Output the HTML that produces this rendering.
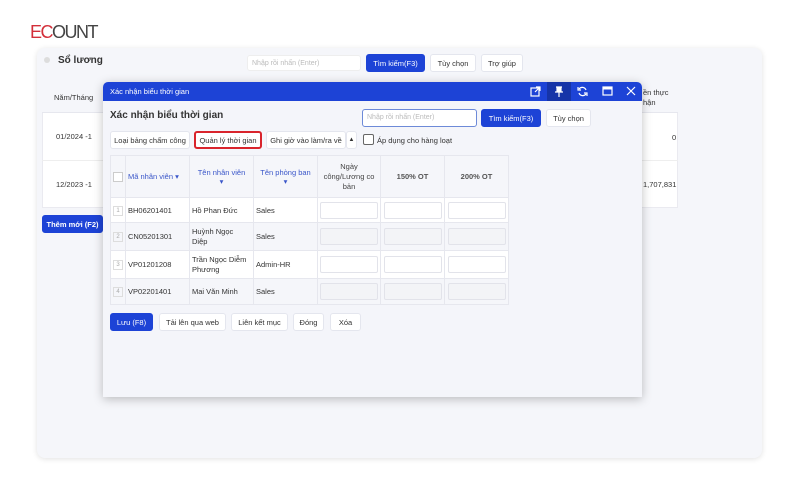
<!DOCTYPE html>
<html><head><meta charset="utf-8"><style>
*{box-sizing:border-box;margin:0;padding:0}
body{width:800px;height:500px;background:#fff;font-family:"Liberation Sans",sans-serif;position:relative;overflow:hidden;color:#333}
.a{position:absolute}
.btn{position:absolute;background:#fff;border:1px solid #e4e6ee;border-radius:3px;font-size:7.5px;color:#333;display:flex;align-items:center;justify-content:center;white-space:nowrap}
.blue{background:#1d43d6;color:#fff;border-color:#1d43d6}
.t{font-size:7.5px;position:absolute;white-space:nowrap}
table{border-collapse:collapse;position:absolute;left:110px;top:155px;width:398px;font-size:7.5px;table-layout:fixed}
td,th{border:1px solid #e6e7ee;padding:0 2px;overflow:hidden}
th{background:#f5f6fa;font-weight:normal;height:42px;color:#444}
th.b{font-weight:bold;color:#555}
td{background:#fff;color:#333}
tr.g td{background:#f5f6fa}
.in{width:58px;height:17px;border:1px solid #e2e3ea;border-radius:2px;background:#fff;margin:auto}
tr.g .in{background:#f3f4f7}
.num{display:inline-block;width:10px;height:10px;border:1px solid #ddd;font-size:6px;text-align:center;line-height:9px;color:#aaa}
.lk{color:#3a56c9}
</style></head><body>
<div class="a" style="left:30px;top:22px;font-size:18px;letter-spacing:-1.5px;color:#444"><span style="color:#d32f3a">EC</span>OUNT</div>
<div class="a" style="left:37px;top:48px;width:725px;height:410px;background:#f5f6fa;border-radius:8px;box-shadow:0 1px 6px rgba(0,0,0,.12)"></div>
<div class="a" style="left:44px;top:57px;width:6px;height:6px;border-radius:50%;background:#ddd"></div>
<div class="t" style="left:58px;top:55px;font-size:10px;font-weight:bold">Sổ lương</div>
<div class="a" style="left:247px;top:55px;width:114px;height:16px;background:#fff;border:1px solid #eee;border-radius:3px;font-size:7px;color:#bbb;padding:4px 4px">Nhập rồi nhấn (Enter)</div>
<div class="btn blue" style="left:366px;top:54px;width:59px;height:18px">Tìm kiếm(F3)</div>
<div class="btn" style="left:430px;top:54px;width:46px;height:18px">Tùy chọn</div>
<div class="btn" style="left:481px;top:54px;width:42px;height:18px">Trợ giúp</div>
<div class="a" style="left:42px;top:82px;width:636px;height:126px;background:#fff;border:1px solid #eaeaf0"></div>
<div class="a" style="left:42px;top:82px;width:636px;height:31px;background:#f5f6fa;border-bottom:1px solid #e6e7ee"></div>
<div class="a" style="left:42px;top:160px;width:636px;height:1px;background:#eee"></div>
<div class="t" style="left:54px;top:93px">Năm/Tháng</div>
<div class="t" style="left:56px;top:132px">01/2024 -1</div>
<div class="t" style="left:56px;top:180px">12/2023 -1</div>
<div class="t" style="left:643px;top:88px;line-height:10px">ền thực<br>hận</div>
<div class="t" style="left:672px;top:133px">0</div>
<div class="t" style="left:643px;top:180px">1,707,831</div>
<div class="btn blue" style="left:42px;top:215px;width:61px;height:18px;font-weight:bold">Thêm mới (F2)</div>
<div class="a" style="left:103px;top:82px;width:539px;height:315px;background:#f4f5fa;border-radius:5px 5px 0 0;box-shadow:0 2px 10px rgba(0,0,0,.25)"></div>
<div class="a" style="left:103px;top:82px;width:539px;height:19px;background:#1d43d6;border-radius:5px 5px 0 0"></div>
<div class="t" style="left:110px;top:87px;color:#fff;font-size:7.5px">Xác nhận biểu thời gian</div>
<div class="a" style="left:547px;top:82px;width:24px;height:19px;background:#1634a8"></div>
<svg class="a" style="left:528px;top:84px" width="112" height="15" viewBox="0 0 112 15" fill="none" stroke="#fff" stroke-width="1.2">
<rect x="3" y="4" width="8" height="8"/><path d="M8 3h4v4M12 3l-5 5"/>
<path d="M28 3h6M29 3v5h4V3M27 8h8M31 8v5" fill="#fff"/>
<path d="M58 6a4 4 0 0 0-7-1M51 9a4 4 0 0 0 7 1M50 3v3h3M59 12V9h-3"/>
<rect x="75" y="3" width="9" height="8"/><path d="M75 4.5h9" stroke-width="2"/>
<path d="M99 3l8 8M107 3l-8 8"/>
</svg>
<div class="t" style="left:110px;top:110px;font-size:10px;font-weight:bold">Xác nhận biểu thời gian</div>
<div class="a" style="left:362px;top:109px;width:115px;height:18px;background:#fff;border:1px solid #6d8ad8;border-radius:3px;font-size:7px;color:#bbb;padding:4px 4px">Nhập rồi nhấn (Enter)</div>
<div class="btn blue" style="left:481px;top:109px;width:60px;height:18px">Tìm kiếm(F3)</div>
<div class="btn" style="left:546px;top:109px;width:45px;height:18px">Tùy chọn</div>
<div class="btn" style="left:110px;top:131px;width:80px;height:18px">Loại bảng chấm công</div>
<div class="btn" style="left:194px;top:131px;width:68px;height:18px;border:2px solid #d9242c">Quản lý thời gian</div>
<div class="btn" style="left:266px;top:131px;width:80px;height:18px">Ghi giờ vào làm/ra về</div>
<div class="btn" style="left:346px;top:131px;width:11px;height:18px;font-size:6px">▲</div>
<div class="a" style="left:363px;top:134px;width:11px;height:11px;border:1px solid #666;border-radius:2px;background:#fff"></div>
<div class="t" style="left:377px;top:136px">Áp dụng cho hàng loạt</div>
<table>
<colgroup><col style="width:15px"><col style="width:64px"><col style="width:64px"><col style="width:64px"><col style="width:63px"><col style="width:64px"><col style="width:64px"></colgroup>
<tr style="height:42px"><th><div style="width:10px;height:10px;border:1px solid #ccc;background:#fff"></div></th>
<th class="lk" style="text-align:left">Mã nhân viên ▾</th>
<th class="lk">Tên nhân viên<br>▾</th>
<th class="lk">Tên phòng ban<br>▾</th>
<th style="line-height:10px">Ngày<br>công/Lương co<br>bản</th>
<th class="b">150% OT</th>
<th class="b">200% OT</th></tr>
<tr style="height:25px"><td><span class="num">1</span></td><td>BH06201401</td><td>Hồ Phan Đức</td><td>Sales</td><td><div class="in"></div></td><td><div class="in"></div></td><td><div class="in"></div></td></tr>
<tr class="g" style="height:28px"><td><span class="num">2</span></td><td>CN05201301</td><td style="line-height:10px">Huỳnh Ngọc<br>Diệp</td><td>Sales</td><td><div class="in"></div></td><td><div class="in"></div></td><td><div class="in"></div></td></tr>
<tr style="height:28px"><td><span class="num">3</span></td><td>VP01201208</td><td style="line-height:10px;white-space:nowrap">Trần Ngọc Diễm<br>Phương</td><td>Admin-HR</td><td><div class="in"></div></td><td><div class="in"></div></td><td><div class="in"></div></td></tr>
<tr class="g" style="height:26px"><td><span class="num">4</span></td><td>VP02201401</td><td>Mai Văn Minh</td><td>Sales</td><td><div class="in"></div></td><td><div class="in"></div></td><td><div class="in"></div></td></tr>
</table>
<div class="btn blue" style="left:110px;top:313px;width:43px;height:18px">Lưu (F8)</div>
<div class="btn" style="left:159px;top:313px;width:67px;height:18px">Tải lên qua web</div>
<div class="btn" style="left:231px;top:313px;width:57px;height:18px">Liên kết mục</div>
<div class="btn" style="left:293px;top:313px;width:31px;height:18px">Đóng</div>
<div class="btn" style="left:330px;top:313px;width:31px;height:18px">Xóa</div>
</body></html>
